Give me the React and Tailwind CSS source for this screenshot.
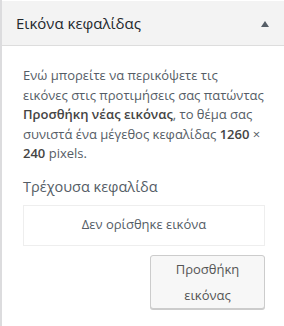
export default function App() {
  return (
    <div
      className="w-[284px] h-[326px] bg-white border-l-2 border-[#dcdcde] flex flex-col"
      style={{ fontFamily: '"Open Sans", "Noto Sans", sans-serif' }}
    >
      <div className="mt-px h-[45px] shrink-0 bg-[#f3f3f3] border-b border-[#dddddd] flex items-center justify-between pl-[14px] pr-[15px]">
        <span className="text-[15px] text-[#23282d] leading-none">Εικόνα κεφαλίδας</span>
        <svg width="8" height="6" viewBox="0 0 8 6" className="mt-px">
          <polygon points="4,0 8,6 0,6" fill="#555d66" />
        </svg>
      </div>
      <div className="pl-[21px] pr-[19px] pt-[20px]">
        <p className="text-[13px] leading-[19.5px] text-[#555d66]">
          Ενώ μπορείτε να περικόψετε τις εικόνες στις προτιμήσεις σας πατώντας{" "}
          <b className="font-semibold text-[#444]">Προσθήκη νέας εικόνας</b>, το θέμα σας συνιστά ένα μέγεθος κεφαλίδας{" "}
          <b className="font-semibold text-[#444]">1260</b> × <b className="font-semibold text-[#444]">240</b> pixels.
        </p>
        <div className="mt-[11px] text-[14.5px] font-medium leading-[24px] text-[#555d66]">Τρέχουσα κεφαλίδα</div>
        <div className="mt-[6px] h-[41px] border border-[#eeeeee] flex items-center justify-center text-[13px] text-[#555d66]">
          Δεν ορίσθηκε εικόνα
        </div>
        <div className="flex justify-end mt-[9px]">
          <button className="w-[115px] h-[54px] bg-[#f7f7f7] border border-[#cccccc] rounded-[3px] shadow-[0_1px_0_#cccccc] text-[13px] leading-[26px] text-[#555555] flex flex-col items-center justify-center">
            <span>Προσθήκη</span>
            <span>εικόνας</span>
          </button>
        </div>
      </div>
    </div>
  );
}
